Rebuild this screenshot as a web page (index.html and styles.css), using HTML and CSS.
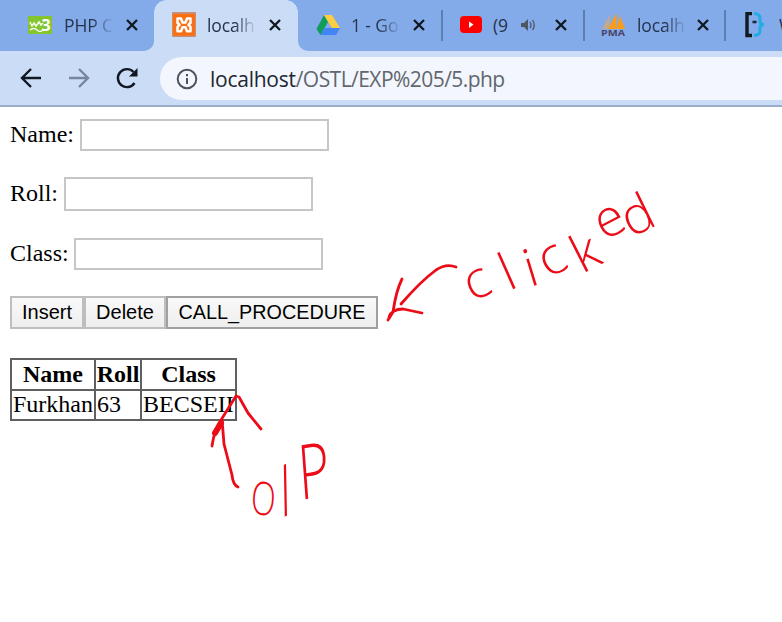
FILE: index.html
```html
<!DOCTYPE html>
<html lang="en">
<head>
<meta charset="utf-8">
<title>localhost/OSTL/EXP%205/5.php</title>
<link rel="stylesheet" href="styles.css">
</head>
<body>
<header class="browser">
  <nav class="tabs">
    <div class="tab first">
      <svg class="icon" viewBox="0 0 26 26"><rect x="1" y="4" width="24" height="18" fill="#83c42f"/><path d="M3 10l2 4 2-3 2 3 3-4 2 3 2-2M3 18q4-3 7 0t6 0" fill="none" stroke="#f4fae9" stroke-width="1.6"/><text x="14.5" y="19" font-size="16" font-weight="700" fill="#fff">3</text></svg>
      <span class="label fade">PHP C</span>
      <svg class="close" viewBox="0 0 12 12"><path d="M1 1l10 10M11 1L1 11"/></svg>
    </div>
    <div class="tab active">
      <svg class="icon" viewBox="0 0 26 26"><rect x="1" y="0" width="24" height="25" rx="1" fill="#c98d70"/><rect x="2" y="2" width="22" height="21.500" fill="#fb6f12"/><path d="M9 6.500H6.500v4.500l2 1.800-2 2v4.500H10l1.500-4h3l1.500 4h3.500v-4.500l-2-2 2-1.800V6.500H16l-1.500 4h-3L10 6.500z" fill="none" stroke="#fff" stroke-width="2.500" stroke-linejoin="round"/></svg>
      <span class="label fade">localh</span>
      <svg class="close" viewBox="0 0 12 12"><path d="M1 1l10 10M11 1L1 11"/></svg>
    </div>
    <div class="tab drive">
      <svg class="icon" viewBox="0 0 26 26"><path d="M9 3L1.500 17l4 6L13 10z" fill="#109d58"/><path d="M9 3h8l8 13h-8z" fill="#ffcd40"/><path d="M9 16h16l-4 7H5.500z" fill="#4285f4"/></svg>
      <span class="label fade">1 - Go</span>
      <svg class="close" viewBox="0 0 12 12"><path d="M1 1l10 10M11 1L1 11"/></svg>
    </div>
    <div class="tab video">
      <svg class="icon" viewBox="0 0 26 26"><rect x="1" y="4" width="22" height="17" rx="4" fill="#f00"/><path d="M10 9.500l4.500 3-4.500 3.500z" fill="#fff"/></svg>
      <span class="label">(9</span>
      <svg class="sound" viewBox="0 0 16 14"><path d="M1 5h3l4-4v12L4 9H1z" fill="#4e5662"/><path d="M10 4q2 3 0 6M12.500 2q3.500 5 0 10" fill="none" stroke="#4e5662" stroke-width="1.300"/></svg>
      <svg class="close" viewBox="0 0 12 12"><path d="M1 1l10 10M11 1L1 11"/></svg>
    </div>
    <div class="tab admin">
      <svg class="icon" viewBox="0 0 26 26"><path d="M1 17l5-9 3-6-1 15z" fill="#c5a98c"/><path d="M7 17l5-10 4-6-1 16zM15 17l4-13 5 13z" fill="#f89c1d"/><text x="0" y="23.500" font-size="9" font-weight="700" fill="#49436b" textLength="24" lengthAdjust="spacingAndGlyphs">PMA</text></svg>
      <span class="label fade">localh</span>
      <svg class="close" viewBox="0 0 12 12"><path d="M1 1l10 10M11 1L1 11"/></svg>
    </div>
    <div class="tab last">
      <svg class="icon" viewBox="0 0 26 26"><path d="M9 1.500H4v22h5" fill="none" stroke="#111820" stroke-width="3.400"/><path d="M11 1.500q6 0 6 5v3q0 3 4 3-4 0-4 3v3q0 5-6 5" fill="none" stroke="#20ace5" stroke-width="3"/><path d="M9.500 10h4" stroke="#182536" stroke-width="2.500"/></svg>
      <span class="label">W</span>
    </div>
  </nav>
  <div class="toolbar">
    <svg class="nav" viewBox="0 0 22 22"><path d="M21 11H2M11 2L2 11l9 9"/></svg>
    <svg class="nav forward" viewBox="0 0 22 22"><path d="M1 11h19M11 2l9 9-9 9"/></svg>
    <svg class="nav" viewBox="0 0 22 22"><path d="M18.500 16A9 9 0 1 1 17.500 5"/><path d="M21.500 1v8.500H13z" fill="#111820" stroke="none"/></svg>
    <div class="address">
      <svg class="info" viewBox="0 0 22 22"><circle cx="11" cy="11" r="9.300"/><path d="M11 10v6M11 6v2.300"/></svg>
      <span class="url">localhost<span class="path">/OSTL/EXP%205/5.php</span></span>
    </div>
  </div>
</header>
<main>
  <form>
    <div class="field"><label for="name">Name:</label><input id="name"></div>
    <div class="field"><label for="roll">Roll:</label><input id="roll"></div>
    <div class="field"><label for="class">Class:</label><input id="class"></div>
    <div class="buttons">
      <button type="button" class="insert">Insert</button><button type="button" class="delete">Delete</button><button type="button" class="call">CALL_PROCEDURE</button>
    </div>
  </form>
  <table>
    <tr><th class="c1">Name</th><th class="c2">Roll</th><th class="c3">Class</th></tr>
    <tr><td>Furkhan</td><td>63</td><td>BECSEII</td></tr>
  </table>
</main>
<svg class="notes" viewBox="0 0 782 622">
  <g class="ink">
    <path d="M456 267q-10-4-20 3-16 12-35 34M402 279q-6 12-9 33l-5 8M389 317q3-8 14-8l19 4"/>
    <path d="M238 487q-5-2-6-12l-8-31q-1-13-2-24M212 446q2-15 9-26l15-24 3 1 9 16 13 16"/>
    <path class="blot" d="M215 433l6-10"/>
  </g>
  <text class="hand" x="472 509 530 549 582 604 631" y="302 291 287 279 274 241 238" rotate="-24 -24 -17 -30 -27 -27 -26">clicked</text>
  <text class="hand" transform="scale(.7 1)" y="513 517 500" x="357 406 429" rotate="6 -22 -6"><tspan class="big-o">O</tspan><tspan class="slash">/</tspan><tspan class="big-p">P</tspan></text>
</svg>
</body>
</html>
```

FILE: styles.css
```css
* { box-sizing: border-box; }
body { margin: 0; width: 782px; height: 622px; overflow: hidden; position: relative; background: #fff; color: #000; font: 24px "Liberation Serif", serif; }
svg { display: block; flex: none; }
.browser { height: 107px; background: #cbdcf7; border-bottom: 2px solid #9aacc9; font-family: "Open Sans", sans-serif; }
.tabs { height: 51px; display: flex; background: #cbdcf7; }
.tab { height: 51px; width: 142px; flex: none; display: flex; align-items: center; padding: 0 14px 2px 17px; background: #84abe9; position: relative; }
.first { width: 154px; padding-left: 27px; padding-right: 16px; border-bottom-right-radius: 10px; }
.tabs .active { width: 144px; background: radial-gradient(circle at 12px 12px, #cbdcf7 11.5px, #84abe9 12px) 0 0 / 12px 12px no-repeat, radial-gradient(circle at 0 12px, #cbdcf7 11.5px, #84abe9 12px) 100% 0 / 12px 12px no-repeat, linear-gradient(#cbdcf7, #cbdcf7) 12px 0 / 120px 12px no-repeat, linear-gradient(#cbdcf7, #cbdcf7) 0 12px no-repeat; }
.drive { width: 145px; border-bottom-left-radius: 10px; }
.video { padding-left: 16px; }
.admin { width: 141px; padding-left: 16px; }
.last { flex: 1; padding-right: 0; overflow: hidden; }
.drive::after, .video::after, .admin::after { content: ""; position: absolute; right: 0; top: 10px; width: 2px; height: 31px; background: #5e7eb1; }
.icon { width: 26px; height: 26px; }
.label { font-size: 17.5px; line-height: 26px; color: #26334d; width: 50px; margin-left: 10px; white-space: nowrap; letter-spacing: -.1px; }
.fade { -webkit-mask-image: linear-gradient(90deg, #000 55%, transparent 100%); mask-image: linear-gradient(90deg, #000 55%, transparent 100%); }
.first .label { margin-left: 11px; }
.video .label { width: 18px; margin-left: 8px; }
.sound { width: 16px; height: 14px; margin-left: 9px; }
.close { width: 12px; height: 12px; margin-left: 12px; fill: none; stroke: #111820; stroke-width: 2.3; }
.video .close { margin-left: 19px; }
.admin .close { margin-left: 10px; }
.toolbar { height: 54px; display: flex; align-items: center; padding-left: 20px; gap: 26px; }
.nav { width: 22px; height: 22px; fill: none; stroke: #111820; stroke-width: 2.4; }
.forward { stroke: #77859d; }
.address { flex: 1; height: 43px; margin-top: 1px; margin-left: -4px; display: flex; align-items: center; gap: 12px; padding-left: 16px; background: #f3f7fd; border-radius: 22px 0 0 22px; }
.info { width: 22px; height: 22px; fill: none; stroke: #4f535b; stroke-width: 2; }
.url { font-size: 21px; line-height: 30px; color: #202632; white-space: nowrap; letter-spacing: -.25px; }
.path { color: #61666f; letter-spacing: -.55px; }
main { padding: 12px 10px; }
.field { height: 32px; margin-bottom: 26px; display: flex; align-items: center; gap: 6px; line-height: 30px; }
.field label { margin-top: -2px; }
.field:nth-child(2) { height: 34px; margin-bottom: 27px; }
input { width: 249px; height: 32px; padding: 0; border: 2px solid #c6c6c6; background: #fff; }
.field:nth-child(2) input { height: 34px; }
.field:nth-child(3) input { margin-left: -1px; }
.buttons { display: flex; height: 33px; }
button { height: 33px; padding: 0; border: 2px solid #bebebe; background: linear-gradient(#f9f9f9, #eee); color: #000; font: 20px "Liberation Sans", sans-serif; }
.insert { width: 74px; }
.delete { width: 82px; }
.call { width: 212px; border-color: #a0a0a0; font-size: 19.8px; }
table { margin-top: 29px; border-collapse: collapse; table-layout: fixed; width: 227px; line-height: 26px; }
th, td { border: 2px solid #606060; padding: 0 1px 2px; height: 30.5px; text-align: left; white-space: nowrap; }
th { text-align: center; padding: 0 0 1px; }
.c1 { width: 84px; }
.c2 { width: 46px; }
.notes { position: absolute; inset: 0; width: 782px; height: 622px; pointer-events: none; }
.ink { fill: none; stroke: #ec0c18; stroke-width: 2.8; stroke-linecap: round; stroke-linejoin: round; }
.blot { stroke-width: 6; }
.hand { font-family: "Open Sans", sans-serif; font-weight: 300; font-size: 52px; fill: #ec0c18; }
.big-o { font-size: 46px; }
.slash { font-size: 68px; }
.big-p { font-size: 76px; }
```
